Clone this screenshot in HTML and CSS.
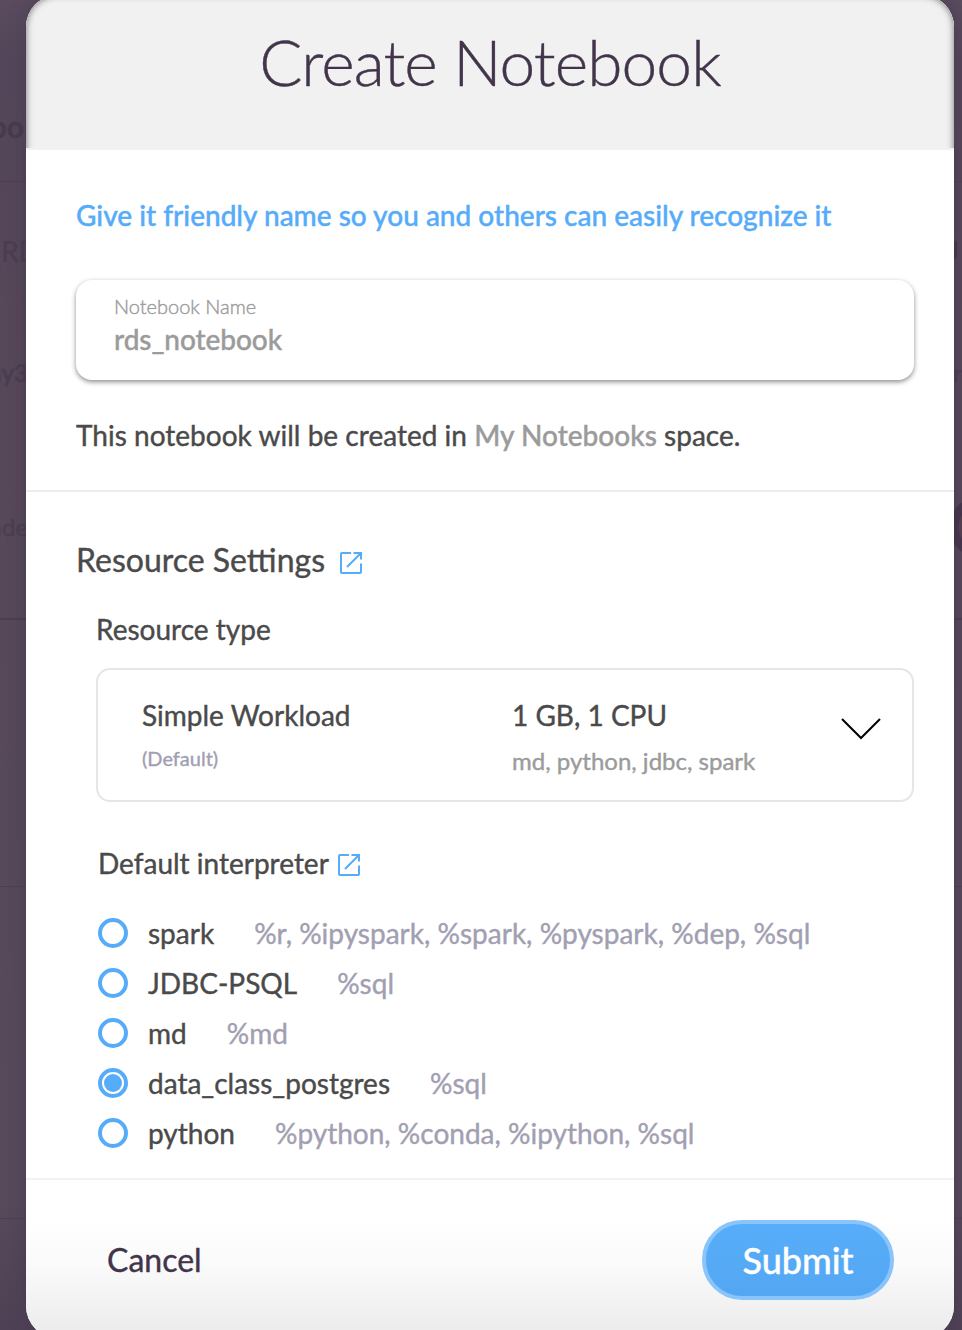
FILE: index.html
```html
<!DOCTYPE html>
<html lang="en">
<head>
<meta charset="utf-8">
<title>Create Notebook</title>
<link rel="stylesheet" href="styles.css">
</head>
<body>
<div class="backdrop" aria-hidden="true">
  <span class="ghost ghost-title">bo</span>
  <span class="ghost ghost-rd">_RD</span>
  <span class="ghost ghost-day">ay3</span>
  <span class="ghost ghost-de">nde</span>
  <span class="ghost ghost-u">U</span>
  <span class="ghost ghost-r">ro</span>
  <span class="ghost-dot"></span>
  <span class="rule rule-a"></span>
  <span class="rule rule-b"></span>
  <span class="rule rule-c"></span>
  <span class="rule rule-d"></span>
</div>
<form class="modal">
  <header class="modal-header"><h1>Create Notebook</h1></header>
  <section class="naming">
    <p class="hint"><span>Give it friendly name so you and others can easily recognize it</span></p>
    <div class="field">
      <span class="field-label">Notebook Name</span>
      <span class="field-value">rds_notebook</span>
    </div>
    <p class="location">This notebook will be created in <span class="muted">My Notebooks</span> space.</p>
  </section>
  <section class="settings">
    <h2><span class="h2-text">Resource Settings</span>
      <svg class="ext" viewBox="0 0 24 24"><path d="M12 2H3Q2 2 2 3V21Q2 22 3 22H21Q22 22 22 21V12.500M22 8.500V2H14.500M21.500 2.500L8 16"/><path class="tip" d="M18 2H22V6Z"/></svg></h2>
    <h3 class="type-label">Resource type</h3>
    <div class="select">
      <div class="select-main"><span class="opt">Simple Workload</span><span class="opt-default">(Default)</span></div>
      <div class="select-info"><span class="opt">1 GB, 1 CPU</span><span class="opt-langs">md, python, jdbc, spark</span></div>
      <svg class="chevron" viewBox="0 0 40 22"><path d="M1 1L20 20L39 1"/></svg>
    </div>
    <h3 class="interp-label"><span>Default interpreter</span>
      <svg class="ext" viewBox="0 0 24 24"><path d="M12 2H3Q2 2 2 3V21Q2 22 3 22H21Q22 22 22 21V12.500M22 8.500V2H14.500M21.500 2.500L8 16"/><path class="tip" d="M18 2H22V6Z"/></svg></h3>
    <ul class="radios">
      <li><i class="radio"></i><span class="name">spark</span><span class="tags">%r, %ipyspark, %spark, %pyspark, %dep, %sql</span></li>
      <li><i class="radio"></i><span class="name">JDBC-PSQL</span><span class="tags">%sql</span></li>
      <li><i class="radio"></i><span class="name">md</span><span class="tags">%md</span></li>
      <li><i class="radio checked"></i><span class="name">data_class_postgres</span><span class="tags">%sql</span></li>
      <li><i class="radio"></i><span class="name">python</span><span class="tags">%python, %conda, %ipython, %sql</span></li>
    </ul>
  </section>
  <footer class="modal-footer">
    <button type="button" class="cancel">Cancel</button>
    <button type="button" class="submit">Submit</button>
  </footer>
</form>
</body>
</html>
```

FILE: styles.css
```css
* { box-sizing: border-box; }
html, body { height: 1330px; overflow: hidden; }
body { margin: 0; position: relative; background: #54475a; font-family: Lato, "Liberation Sans", sans-serif; color: #4a4a4a; -webkit-text-stroke: .4px currentColor; }
h1, h2, h3, p, ul { margin: 0; padding: 0; font-weight: 400; }

/* dimmed page behind the dialog */
.backdrop { position: absolute; inset: 0; overflow: hidden; background: linear-gradient(#5a4c5e 0, #54465a 60px, #564859 300px, #574a5b 1200px, #4f4155 1330px); }
.ghost { position: absolute; color: #4c3e51; font-size: 24px; line-height: 30px; }
.ghost-title { right: 938px; top: 108px; font-size: 30px; line-height: 36px; font-weight: 700; color: #483a4e; }
.ghost-rd { right: 922px; top: 236px; font-size: 28px; }
.ghost-day { right: 934px; top: 358px; font-weight: 700; }
.ghost-de { right: 934px; top: 512px; }
.ghost-u { left: 938px; top: 236px; font-size: 28px; font-weight: 700; color: #46384c; }
.ghost-r { left: 953px; top: 358px; }
.ghost-dot { position: absolute; left: 949px; top: 497px; width: 60px; height: 60px; border-radius: 50%; background: radial-gradient(circle, #54404f 20px, #45364d 21px); }
.rule { position: absolute; left: 0; right: 0; height: 1px; background: #503f54; }
.rule-a { top: 181px; }
.rule-b { top: 618px; height: 2px; background: #4b3e50; }
.rule-c { top: 886px; }
.rule-d { top: 1218px; }

.modal { position: relative; width: 928px; height: 1343px; margin: -5px 0 0 26px; border-radius: 32px; overflow: hidden; background: #fff; box-shadow: 0 0 18px rgba(60, 45, 70, .45); display: flex; flex-direction: column; }
/* inner shade along the header's top and side edges */
.modal::before { content: ""; position: absolute; left: 0; right: 0; top: 0; height: 180px; border-radius: 32px 32px 0 0; box-shadow: inset 0 0 7px rgba(0, 0, 0, .55); clip-path: inset(0 0 27px 0); pointer-events: none; }
.modal-header { height: 155px; background: #f1f1f1; text-align: center; }
h1 { padding: 28px 0 0; font-size: 64px; line-height: 78px; font-weight: 300; letter-spacing: -.92px; color: #42344a; }

.naming { height: 342px; padding: 47px 40px 0 50px; border-bottom: 2px solid #ededed; }
.hint { font-size: 28px; line-height: 36px; font-weight: 500; color: #56acf9; white-space: nowrap; }
.field { height: 100px; margin-top: 47px; width: 838px; padding: 12px 38px; border-radius: 16px; box-shadow: 0 2px 5px rgba(0, 0, 0, .45); display: flex; flex-direction: column; color: #9b9b9b; }
.field-label { font-size: 20px; line-height: 28px; font-weight: 300; }
.field-value { margin-top: 1px; font-size: 28px; line-height: 36px; font-weight: 500; letter-spacing: -.06px; }
.location { margin-top: 37px; font-size: 28px; line-height: 36px; white-space: nowrap; letter-spacing: .02px; }
.muted { color: #9b9b9b; font-weight: 500; }

.settings { height: 688px; padding: 48px 40px 0 50px; border-bottom: 2px solid #f1f1f1; }
h2 { display: flex; align-items: center; gap: 14px; font-size: 32px; line-height: 40px; }
.ext { width: 24px; height: 24px; fill: none; stroke: #56acf9; stroke-width: 2; flex: none; position: relative; top: 2px; }
.ext .tip { fill: #56acf9; stroke: none; }
h2 .ext { top: 3px; }
h3 { font-size: 28px; line-height: 36px; }
.type-label { margin: 31px 0 0 20px; }
.select { display: flex; width: 818px; height: 134px; margin: 21px 0 0 20px; padding: 27px 31px 0 44px; border: 2px solid #e6e6e6; border-radius: 14px; }
.select-main { width: 370px; display: flex; flex-direction: column; }
.select-info { flex: 1; display: flex; flex-direction: column; }
.opt { font-size: 28px; line-height: 36px; }
.opt-default { margin-top: 11px; font-size: 20px; line-height: 28px; color: #a29fb2; }
.opt-langs { margin-top: 13px; font-size: 24px; line-height: 30px; color: #9b9b9b; }
.chevron { width: 40px; height: 22px; margin-top: 21px; fill: none; stroke: #000; stroke-width: 2; }
.interp-label { display: flex; align-items: center; gap: 8px; margin: 43px 0 0 22px; }
.radios { list-style: none; margin: 27px 0 0 22px; }
.radios li { display: flex; align-items: center; height: 50px; font-size: 28px; line-height: 36px; white-space: nowrap; }
.radio { width: 30px; height: 30px; margin: 0 20px 0 0; border: 4px solid #56acf9; border-radius: 50%; display: grid; place-items: center; }
.checked::before { content: ""; width: 18px; height: 18px; border-radius: 50%; background: #56acf9; }
.tags { margin-left: 40px; color: #a29fb2; }

.modal-footer { flex: 1; display: flex; justify-content: space-between; align-items: flex-start; padding: 40px 60px 0 81px; background: linear-gradient(#fff 0, #fff 35px, #fafafa 85px, #ececec 152px); }
button { border: 0; background: none; padding: 0; font-family: inherit; }
.cancel { height: 80px; padding-bottom: 2px; font-size: 32px; color: #42344a; }
.submit { width: 192px; height: 80px; border: 4px solid #89c4fa; border-radius: 40px; background: linear-gradient(#58adfa, #53a7f2); color: #fff; font-size: 36px; font-weight: 500; }
```
